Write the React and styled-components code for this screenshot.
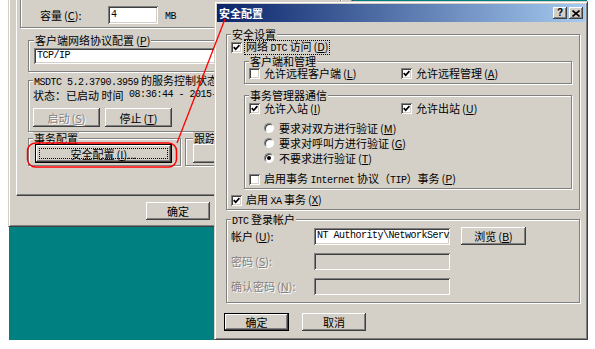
import React from "react";
import styled, { createGlobalStyle, css } from "styled-components";

const FACE = "#D4D0C8";

const GlobalStyle = createGlobalStyle`
  html, body {
    margin: 0;
    padding: 0;
    background: #fff;
  }
  body {
    font-family: "Noto Sans CJK SC", "Noto Sans", sans-serif;
    font-size: 11px;
    line-height: 12px;
    color: #000;
  }
`;

// classic 3d edges
const raised = css`
  box-shadow: inset -1px -1px #404040, inset 1px 1px #fff,
    inset -2px -2px #808080, inset 2px 2px ${FACE};
`;

const sunken = css`
  box-shadow: inset 1px 1px #808080, inset -1px -1px #fff,
    inset 2px 2px #404040, inset -2px -2px ${FACE};
`;

const greyed = css`
  color: #808080;
  text-shadow: 1px 1px #fff;
`;

const Screen = styled.div`
  position: relative;
  width: 595px;
  height: 349px;
  overflow: hidden;
  background: #fff;
`;

const Desktop = styled.div`
  position: relative;
  margin-left: 9px;
  width: 578px;
  height: 340px;
  background: #008080;
`;

const Window = styled.div`
  position: absolute;
  left: ${(p) => p.$x}px;
  top: ${(p) => p.$y}px;
  width: ${(p) => p.$w}px;
  height: ${(p) => p.$h}px;
  box-sizing: border-box;
  display: flex;
  flex-direction: column;
  padding: 2px;
  background: ${FACE};
  border: 1px solid;
  border-color: ${FACE} #404040 #404040 ${FACE};
  box-shadow: inset 1px 1px #fff, inset -1px -1px #808080;
`;

const TitleBar = styled.div`
  flex: none;
  height: 18px;
  display: flex;
  align-items: center;
  justify-content: space-between;
  padding: 0 2px;
  background: linear-gradient(to right, #0a246a, #a6caf0);
`;

const TitleText = styled.span`
  color: #fff;
  font-weight: 700;
  font-size: 11px;
`;

const TitleButtons = styled.div`
  display: flex;
  gap: 2px;
`;

const TitleButton = styled.span`
  width: 14px;
  height: 12px;
  box-sizing: border-box;
  display: flex;
  align-items: center;
  justify-content: center;
  background: ${FACE};
  ${raised}
  font: 700 10px/10px "Liberation Sans", sans-serif;
  color: #000;
`;

const Client = styled.div`
  flex: 1;
  display: flex;
  flex-direction: column;
  padding: 0 5px 0 9px;
`;

const Group = styled.fieldset`
  flex: ${(p) => (p.$grow ? 1 : "none")};
  display: flex;
  flex-direction: column;
  align-items: ${(p) => (p.$start ? "flex-start" : "stretch")};
  min-width: 0;
  margin: ${(p) => p.$mt || 0}px ${(p) => p.$mr || 0}px 0 ${(p) => p.$ml || 0}px;
  padding: ${(p) => p.$pt || 0}px ${(p) => p.$pr || 0}px ${(p) => p.$pb || 0}px
    ${(p) => p.$pl || 0}px;
  border: 1px solid #808080;
  box-shadow: inset 1px 1px #fff, 1px 1px #fff;
`;

const Legend = styled.legend`
  height: 12px;
  padding: 0 1px;
  line-height: 12px;
  background: ${FACE};
  white-space: nowrap;
`;

const Mono = styled.span`
  font-family: "Liberation Mono", "DejaVu Sans Mono", monospace;
  font-size: 10px;
  line-height: 10px;
  letter-spacing: -0.5px;
`;

const Access = styled.span`
  margin-left: 2px;
`;

const Key = ({ k }) => (
  <Access>
    (<u>{k}</u>)
  </Access>
);

const Row = styled.div`
  display: flex;
  align-items: center;
  height: ${(p) => p.$h}px;
  margin-top: ${(p) => p.$mt || 0}px;
  padding-left: ${(p) => p.$pl || 0}px;
  gap: ${(p) => p.$gap || 0}px;
  white-space: nowrap;
`;

const Pair = styled.div`
  display: grid;
  grid-template-columns: 152px auto;
  align-items: center;
  height: ${(p) => p.$h}px;
`;

const CheckItem = styled.span`
  display: inline-flex;
  align-items: center;
  gap: 2px;
  white-space: nowrap;
`;

const CheckBox = styled.span`
  flex: none;
  width: 11px;
  height: 11px;
  box-sizing: border-box;
  display: flex;
  align-items: center;
  justify-content: center;
  background: #fff;
  ${sunken}
`;

const Caption = styled.span`
  padding: 0 1px;
  line-height: 11px;
  border: 1px ${(p) => (p.$focus ? "dotted #000" : "solid transparent")};
`;

const Tick = () => (
  <svg width="7" height="7" viewBox="0 0 7 7">
    <path d="M0.7 3.1 L2.7 5.2 L6.4 1.1" fill="none" stroke="#000" strokeWidth="1.7" />
  </svg>
);

const Check = ({ checked, focus, children }) => (
  <CheckItem>
    <CheckBox>{checked && <Tick />}</CheckBox>
    <Caption $focus={focus}>{children}</Caption>
  </CheckItem>
);

const RadioDot = styled.span`
  flex: none;
  width: 10px;
  height: 10px;
  box-sizing: border-box;
  border-radius: 50%;
  display: flex;
  align-items: center;
  justify-content: center;
  background: #fff;
  border: 1px solid;
  border-color: #808080 #fff #fff #808080;
  box-shadow: inset 1px 1px #404040;

  &::after {
    content: "";
    width: 4px;
    height: 4px;
    border-radius: 50%;
    background: ${(p) => (p.$on ? "#000" : "transparent")};
  }
`;

const Radio = ({ on, children }) => (
  <Row $h={15} $pl={15} $gap={5}>
    <RadioDot $on={on} />
    <span>{children}</span>
  </Row>
);

const FieldLabel = styled.span`
  flex: none;
  width: ${(p) => p.$w}px;
  white-space: nowrap;
  ${(p) => p.$off && greyed}
`;

const TextBox = styled.div`
  flex: none;
  width: ${(p) => p.$w}px;
  height: ${(p) => p.$h}px;
  box-sizing: border-box;
  display: flex;
  align-items: center;
  padding: 0 3px;
  overflow: hidden;
  white-space: nowrap;
  background: ${(p) => (p.$off ? FACE : "#fff")};
  ${sunken}
`;

const Unit = styled.span`
  margin-left: 7px;
`;

const Button = styled.button`
  flex: none;
  display: flex;
  align-items: center;
  justify-content: center;
  width: ${(p) => p.$w}px;
  height: ${(p) => p.$h || 18}px;
  margin: 0 0 0 ${(p) => p.$ml || 0}px;
  padding: 0;
  box-sizing: border-box;
  font: inherit;
  color: #000;
  background: ${FACE};
  border: ${(p) => (p.$default ? "1px solid #000" : "none")};
  ${raised}
  ${(p) => p.disabled && greyed}
`;

const FocusFrame = styled.span`
  flex: 1;
  align-self: stretch;
  margin: 3px;
  display: flex;
  align-items: center;
  justify-content: center;
  border: 1px dotted #000;
`;

const DialogButtons = styled.div`
  display: flex;
  gap: 13px;
  margin: 10px 0 0 -2px;
`;

const TabPage = styled.div`
  flex: none;
  width: 330px;
  height: 213px;
  margin-left: 5px;
  box-sizing: border-box;
  display: flex;
  flex-direction: column;
  border-left: 1px solid #fff;
  border-bottom: 1px solid #404040;
  box-shadow: inset 0 -1px #808080;
`;

const GroupRow = styled.div`
  display: flex;
  gap: 4px;
  margin-left: 11px;
`;

const BackButtons = styled.div`
  display: flex;
  margin: 6px 0 0 135px;
`;

const Annotation = styled.svg`
  position: absolute;
  left: 0;
  top: 0;
  pointer-events: none;
`;

function PropertiesWindow() {
  return (
    <Window $x={-1} $y={-20} $w={345} $h={247}>
      <TabPage>
        <Group $mt={7} $ml={3} $mr={5} $pt={15} $pl={19} $pb={3}>
          <Row $h={18}>
            <FieldLabel $w={68}>
              容量<Key k="C" />:
            </FieldLabel>
            <TextBox $w={50} $h={18}>
              <Mono>4</Mono>
            </TextBox>
            <Unit>
              <Mono>MB</Mono>
            </Unit>
          </Row>
        </Group>

        <Group $mt={6} $ml={11} $mr={5} $pt={2} $pl={5} $pb={7}>
          <Legend>
            客户端网络协议配置<Key k="P" />
          </Legend>
          <TextBox $w={300} $h={16}>
            <Mono>TCP/IP</Mono>
          </TextBox>
        </Group>

        <Group $mt={2} $ml={11} $mr={5} $pl={4} $pb={4}>
          <Legend>
            <Mono>MSDTC 5.2.3790.3959</Mono> 的服务控制状态
          </Legend>
          <Row $h={12} $mt={3}>
            状态：已启动 时间 <Mono>&nbsp;08:36:44 - 2015-0</Mono>
          </Row>
          <Row $h={19} $mt={7} $gap={5}>
            <Button $w={67} $h={19} disabled>
              启动<Key k="S" />
            </Button>
            <Button $w={67} $h={19}>
              停止<Key k="T" />
            </Button>
          </Row>
        </Group>

        <GroupRow>
          <Group $pl={4} $pr={8} $pb={2}>
            <Legend>事务配置</Legend>
            <Button $w={137} $h={19} $ml={2} $default>
              <FocusFrame>
                安全配置<Key k="I" />...
              </FocusFrame>
            </Button>
          </Group>
          <Group $grow $start $pl={7} $pb={2}>
            <Legend>跟踪</Legend>
            <Button $w={80} $h={19} />
          </Group>
        </GroupRow>
      </TabPage>

      <BackButtons>
        <Button $w={64}>确定</Button>
      </BackButtons>
    </Window>
  );
}

function SecurityDialog() {
  return (
    <Window $x={205} $y={1} $w={374} $h={339}>
      <TitleBar>
        <TitleText>安全配置</TitleText>
        <TitleButtons>
          <TitleButton>?</TitleButton>
          <TitleButton>
            <svg width="8" height="7" viewBox="0 0 8 7">
              <path d="M0.5 0.5 L7.5 6.5 M7.5 0.5 L0.5 6.5" stroke="#000" strokeWidth="1.6" />
            </svg>
          </TitleButton>
        </TitleButtons>
      </TitleBar>

      <Client>
        <Group $mt={6} $pl={4} $pr={7} $pb={2}>
          <Legend>安全设置</Legend>
          <Row $h={14}>
            <Check checked focus>
              网络 <Mono>DTC</Mono> 访问<Key k="D" />
            </Check>
          </Row>

          <Group $mt={1} $ml={13} $pl={4} $pb={4}>
            <Legend>客户端和管理</Legend>
            <Pair $h={12}>
              <Check>
                允许远程客户端<Key k="L" />
              </Check>
              <Check checked>
                允许远程管理<Key k="A" />
              </Check>
            </Pair>
          </Group>

          <Group $mt={5} $ml={13} $pl={4} $pb={2}>
            <Legend>事务管理器通信</Legend>
            <Pair $h={14}>
              <Check checked>
                允许入站<Key k="I" />
              </Check>
              <Check checked>
                允许出站<Key k="U" />
              </Check>
            </Pair>
            <Row $h={5} />
            <Radio>
              要求对双方进行验证<Key k="M" />
            </Radio>
            <Radio>
              要求对呼叫方进行验证<Key k="G" />
            </Radio>
            <Radio on>
              不要求进行验证<Key k="T" />
            </Radio>
            <Row $h={14} $mt={7}>
              <Check>
                启用事务 <Mono>Internet</Mono> 协议（<Mono>TIP</Mono>）事务<Key k="P" />
              </Check>
            </Row>
          </Group>

          <Row $h={14} $mt={4}>
            <Check checked>
              启用 <Mono>XA</Mono> 事务<Key k="X" />
            </Check>
          </Row>
        </Group>

        <Group $mt={3} $pl={4} $pb={7}>
          <Legend>
            <Mono>DTC</Mono> 登录帐户
          </Legend>
          <Row $h={18} $mt={2}>
            <FieldLabel $w={83}>
              帐户<Key k="U" />:
            </FieldLabel>
            <TextBox $w={136} $h={17}>
              <Mono>{"NT Authority\\NetworkService"}</Mono>
            </TextBox>
            <Button $w={65} $ml={11}>
              浏览<Key k="B" />
            </Button>
          </Row>
          <Row $h={18} $mt={7}>
            <FieldLabel $w={83} $off>
              密码<Key k="S" />:
            </FieldLabel>
            <TextBox $w={136} $h={17} $off />
          </Row>
          <Row $h={18} $mt={7}>
            <FieldLabel $w={83} $off>
              确认密码<Key k="N" />:
            </FieldLabel>
            <TextBox $w={136} $h={17} $off />
          </Row>
        </Group>

        <DialogButtons>
          <Button $w={65} $default>
            确定
          </Button>
          <Button $w={64}>取消</Button>
        </DialogButtons>
      </Client>
    </Window>
  );
}

export default function App() {
  return (
    <>
      <GlobalStyle />
      <Screen>
        <Desktop>
          <PropertiesWindow />
          <SecurityDialog />
        </Desktop>
        <Annotation width="595" height="349" viewBox="0 0 595 349">
          <rect x="27.5" y="143" width="149" height="24" rx="8" fill="none" stroke="#f00" strokeWidth="1.5" />
          <line x1="177" y1="143" x2="225" y2="19" stroke="#f00" strokeWidth="1.3" />
        </Annotation>
      </Screen>
    </>
  );
}
